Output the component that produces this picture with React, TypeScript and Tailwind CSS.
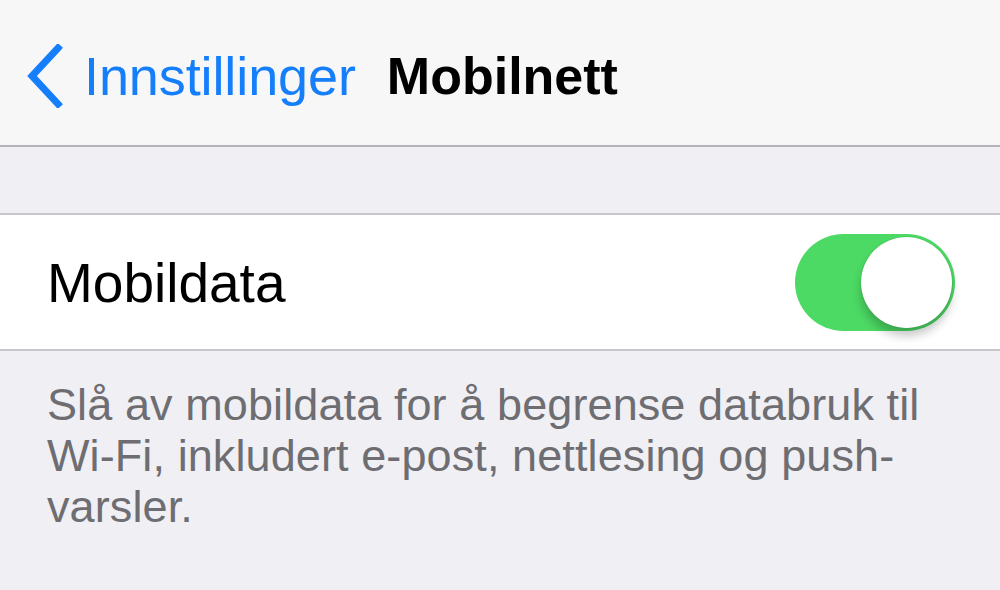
import React from "react";

const font = { fontFamily: '"Liberation Sans", Arial, sans-serif' };

const BackChevron: React.FC = () => (
  <svg width="40" height="64" viewBox="0 0 40 64" className="shrink-0">
    <path
      d="M34 4 L8 32 L34 60"
      fill="none"
      stroke="#157efb"
      strokeWidth="7"
      strokeLinecap="square"
      strokeLinejoin="miter"
    />
  </svg>
);

const Toggle: React.FC<{ on: boolean }> = ({ on }) => (
  <div
    className={`relative flex h-[97px] w-[160px] items-center rounded-full ${
      on ? "bg-[#4cd964] justify-end" : "bg-[#e5e5ea] justify-start"
    } p-[3px]`}
  >
    <div className="h-[91px] w-[91px] rounded-full bg-white shadow-[0_8px_10px_rgba(0,0,0,0.22),0_0_1px_rgba(0,0,0,0.3)]" />
  </div>
);

const App: React.FC = () => {
  return (
    <div className="h-[590px] w-[1000px] overflow-hidden bg-[#efeff4]" style={font}>
      {/* nav bar */}
      <div className="flex h-[147px] items-center border-b-2 border-[#b5b4b9] bg-[#f7f7f7] pl-[24px] pt-[7px]">
        <BackChevron />
        <span className="ml-[20px] text-[54px] leading-none tracking-[-0.1px] text-[#157efb]">
          Innstillinger
        </span>
        <span className="ml-[31px] text-[52px] font-bold leading-none text-black">
          Mobilnett
        </span>
      </div>

      {/* group */}
      <div className="mt-[66px] border-y-2 border-[#c8c7cc] bg-white">
        <div className="flex h-[134px] items-center justify-between pl-[47px] pr-[45px]">
          <span className="pt-[2px] text-[55px] leading-none text-black">Mobildata</span>
          <Toggle on />
        </div>
      </div>

      {/* footer note */}
      <p className="pl-[47px] pr-[50px] pt-[28px] text-[45px] leading-[51px] text-[#6d6d72] tracking-[0.1px]">
        Slå av mobildata for å begrense databruk til Wi-Fi, inkludert e-post, nettlesing og push-varsler.
      </p>
    </div>
  );
};

export default App;
